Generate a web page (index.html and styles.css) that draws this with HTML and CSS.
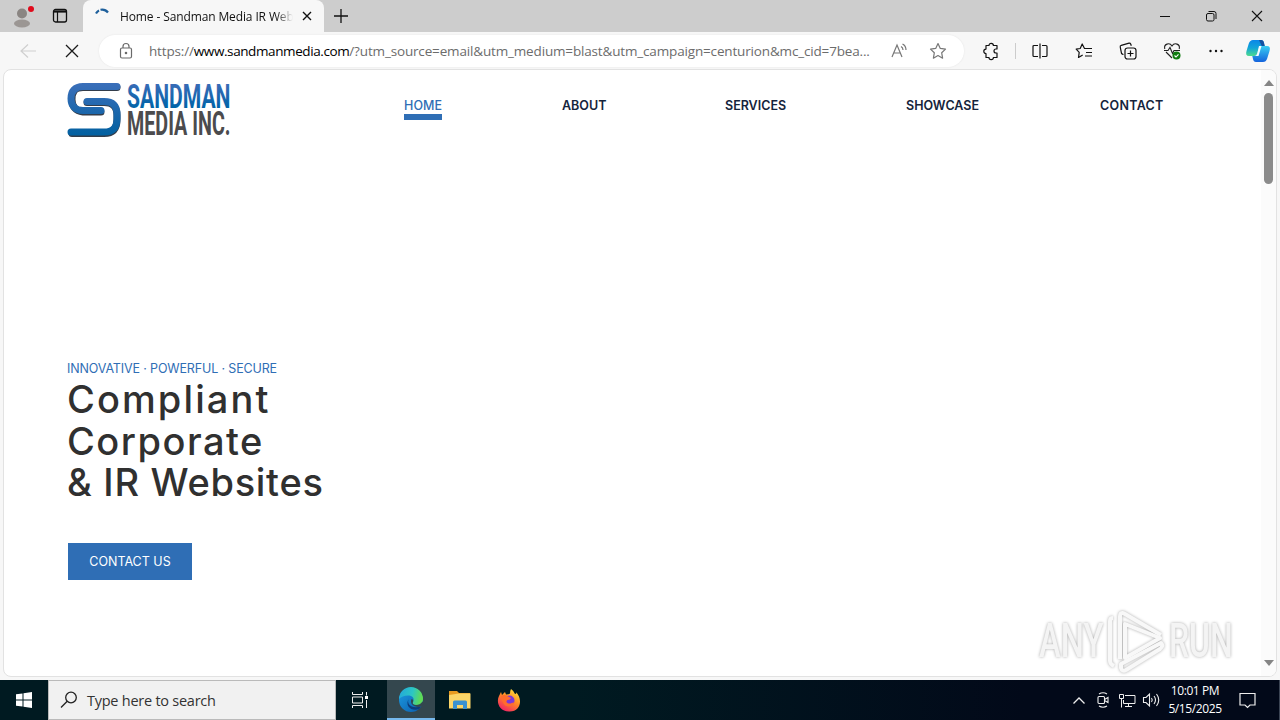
FILE: index.html
```
<!DOCTYPE html>
<html lang="en">
<head>
    <meta charset="UTF-8">
    <meta name="viewport" content="width=device-width, initial-scale=1.0">
    <title>Home - Sandman Media IR Websites</title>
    <link rel="stylesheet" href="styles.css">
</head>
<body>
    <div class="tabbar">
        <div class="profile">
            <svg width="28" height="28" viewBox="0 0 28 28"><circle cx="14" cy="10.500" r="5" fill="#8a8582"/><ellipse cx="14" cy="20.500" rx="8" ry="4" fill="#9b9693"/><circle cx="23" cy="6" r="3" fill="#e00b1c"/></svg>
        </div>
        <div class="workspaces">
            <svg width="16" height="16" viewBox="0 0 16 16" fill="none" stroke="#111"><rect x="1.500" y="1.500" width="13" height="12.500" rx="2" stroke-width="1.300"/><path d="M2 3.500h12" stroke-width="2.200"/><path d="M5.500 4v10" stroke-width="1.200"/></svg>
        </div>
        <div class="tab">
            <svg class="spinner" width="16" height="16" viewBox="0 0 16 16" fill="none" stroke="#1d5f9b" stroke-width="2.200"><path d="M2 5.500Q3.200 3.200 5 2.400M6.500 1.800Q11 .8 14 4.500"/></svg>
            <span class="tab-title">Home - Sandman Media IR Webs</span>
            <svg width="10" height="10" viewBox="0 0 10 10" stroke="#111" stroke-width="1.400"><path d="M1 1l8 8M9 1l-8 8"/></svg>
        </div>
        <svg class="new-tab" width="14" height="14" viewBox="0 0 14 14" stroke="#111" stroke-width="1.300"><path d="M7 0v14M0 7h14"/></svg>
        <div class="window-buttons">
            <span><svg width="12" height="12" viewBox="0 0 12 12" stroke="#111"><path d="M1 6.500h10"/></svg></span>
            <span><svg width="12" height="12" viewBox="0 0 12 12" fill="none" stroke="#111"><rect x="1.500" y="3.500" width="7.500" height="7.500" rx="1.500"/><path d="M3.500 1.500h5.500a2 2 0 0 1 2 2v5.500"/></svg></span>
            <span><svg width="12" height="12" viewBox="0 0 12 12" stroke="#111" stroke-width="1.100"><path d="M1 1l10 10M11 1L1 11"/></svg></span>
        </div>
    </div>

    <div class="toolbar">
        <span class="tool"><svg width="16" height="16" viewBox="0 0 16 16" fill="none" stroke="#cfcfcf" stroke-width="1.200"><path d="M16 8H1M8 1.500L1 8l7 6.500"/></svg></span>
        <span class="tool"><svg width="14" height="14" viewBox="0 0 14 14" stroke="#1b1b1b" stroke-width="1.300"><path d="M1 1l12 12M13 1L1 13"/></svg></span>
        <div class="address">
            <svg class="lock" width="14" height="18" viewBox="0 0 14 18" fill="none" stroke="#6a6a6a" stroke-width="1.200"><rect x="1.500" y="6" width="11" height="10" rx="1.500"/><path d="M4 6V4.500a3 3 0 0 1 6 0V6"/><circle cx="7" cy="11" r=".7" fill="#6a6a6a"/></svg>
            <span class="url">https://<b>www.sandmanmedia.com</b>/?utm_source=email&amp;utm_medium=blast&amp;utm_campaign=centurion&amp;mc_cid=7bea...</span>
            <svg class="read" width="18" height="18" viewBox="0 0 18 18" fill="none" stroke="#777" stroke-width="1.200"><path d="M2 15L7 3l5 12M3.700 11h6.600M11 4.500q2 1 2 3.500M12.500 2q3.500 1.700 3.500 6"/></svg>
            <svg class="star" width="18" height="18" viewBox="0 0 18 18" fill="none" stroke="#777" stroke-width="1.200" stroke-linejoin="round"><path d="M9 1.500l2.300 4.900 5.200.7-3.800 3.700.9 5.400L9 13.600l-4.600 2.600.9-5.400-3.800-3.700 5.200-.7z"/></svg>
        </div>
        <span class="tool extensions"><svg width="16" height="18" viewBox="0 0 16 18" fill="none" stroke="#111" stroke-width="1.200" stroke-linejoin="round"><path d="M3 3.500h3a2.200 2.200 0 0 1 4.400 0H14V7h-1a2 2 0 0 0 0 4h1v4.500h-3.600a2.200 2.200 0 0 1-4.400 0H3V11.500a2.200 2.200 0 0 1 0-4.400z"/></svg></span>
        <span class="divider"></span>
        <span class="tool"><svg width="16" height="16" viewBox="0 0 16 16" fill="none" stroke="#111" stroke-width="1.200"><path d="M6 2.500H2q-1 0-1 1v9q0 1 1 1h4M10 2.500h4q1 0 1 1v9q0 1-1 1h-4M8 .5v15"/></svg></span>
        <span class="tool"><svg width="18" height="18" viewBox="0 0 18 18" fill="none" stroke="#111" stroke-width="1.200" stroke-linejoin="round"><path d="M9.500 6.500L7.200 2 5.200 6.500l-4 .6 3 3.300-.7 5.100 4.200-2.400M7.200 2l2.300 4.500H17M11 10.500h6M10 14h7"/></svg></span>
        <span class="tool"><svg width="18" height="18" viewBox="0 0 18 18" fill="none" stroke="#111" stroke-width="1.200"><path d="M4.500 12.500q-1.500 0-2-1.200L1.300 5.300q-.5-1.500 1-2L10 1.200q1.300-.2 1.800 1l.5 1.600"/><rect x="6" y="6" width="11" height="11" rx="2.500"/><path d="M11.500 8.500v6M8.500 11.500h6"/></svg></span>
        <span class="tool"><svg width="18" height="18" viewBox="0 0 18 18" fill="none" stroke="#222" stroke-width="1.100"><path d="M1.800 7C.5 2 6.500 0 9 4c2.500-4 8.500-2 7.200 3M3 10l6 6M1 8.500h4l2-3 2.500 6 1.500-3h6"/><circle cx="13.500" cy="13.500" r="4" fill="#107c10" stroke="none"/><path d="M11.500 13.500l1.500 1.500 2.500-2.700" stroke="#fff"/></svg></span>
        <span class="tool"><svg width="14" height="4" viewBox="0 0 14 4" fill="#111"><circle cx="1.500" cy="2" r="1.200"/><circle cx="7" cy="2" r="1.200"/><circle cx="12.500" cy="2" r="1.200"/></svg></span>
        <span class="tool copilot">
            <svg width="26" height="24" viewBox="0 0 26 24">
                <defs>
                    <linearGradient id="cpa" x1="0" y1="0" x2="0" y2="1"><stop offset="0" stop-color="#0a86e8"/><stop offset=".5" stop-color="#12a5d8"/><stop offset="1" stop-color="#4ddb8e"/></linearGradient>
                    <linearGradient id="cpb" x1="0" y1="0" x2="0" y2="1"><stop offset="0" stop-color="#38cdf2"/><stop offset="1" stop-color="#1463dc"/></linearGradient>
                </defs>
                <path d="M8 1h8q2.500 0 3 3l.7 3h-3q-2.200 0-3 3l-1.500 5q-.7 2-3 2H4Q0 17 1.500 12l2.300-7.500Q5 1 8 1z" fill="url(#cpa)"/>
                <path d="M18 23h-7q-2.500 0-3-3l-.7-3h2q2.200 0 3-3l1.500-5q.7-2 3-2H22q4 0 2.500 5l-2.300 7.500Q21 23 18 23z" fill="url(#cpb)"/>
                <path d="M14 7h2.500l-3 10H10q1.800-.5 2.300-3z" fill="#f5fbff"/>
                <path d="M14 1h2q2.500 0 3 3l.7 3h-3z" fill="#1450a0"/>
            </svg>
        </span>
    </div>

    <div class="page">
        <div class="site">
            <header class="site-header">
                <svg class="logo" width="166" height="56" viewBox="0 0 166 56">
                    <defs>
                        <linearGradient id="blue" gradientUnits="userSpaceOnUse" x1="0" y1="0" x2="0" y2="55"><stop offset="0" stop-color="#3c6fba"/><stop offset="1" stop-color="#0060a0"/></linearGradient>
                        <linearGradient id="word" gradientUnits="userSpaceOnUse" x1="0" y1="-24" x2="0" y2="0"><stop offset="0" stop-color="#3a6cb7"/><stop offset="1" stop-color="#0064a8"/></linearGradient>
                    </defs>
                    <g fill="none" stroke-width="7" stroke-linecap="round" stroke-linejoin="round">
                        <path d="M50 5.500H16C7.500 5.500 5 10 5 17.500S9 29 16 30h18M20 20.500h17c8.500 0 13 4 13 13v4c0 9-4 14-13 14H5" stroke="#333d4b"/>
                        <path d="M50 4.500H16C7.500 4.500 4 9.500 4 16.500s4 12 12 12h18M20 19.500h17c8.500 0 13 4 13 13v4c0 9-4 13.500-13 13.500H4" stroke="url(#blue)"/>
                    </g>
                    <g class="logo-text">
                        <text transform="translate(60 25.500) scale(.69 1)" textLength="150" lengthAdjust="spacingAndGlyphs" fill="url(#word)">SANDMAN</text>
                        <text transform="translate(60 53) scale(.69 1)" textLength="150" lengthAdjust="spacingAndGlyphs" fill="#4b4b4d">MEDIA INC.</text>
                    </g>
                </svg>
                <nav class="menu">
                    <a class="active">HOME</a>
                    <a>ABOUT</a>
                    <a>SERVICES</a>
                    <a>SHOWCASE</a>
                    <a class="contact">CONTACT</a>
                </nav>
            </header>
            <section class="hero">
                <p class="tagline">INNOVATIVE · POWERFUL · SECURE</p>
                <h1><span class="line-1">Compliant</span><br><span class="line-2">Corporate</span><br><span class="line-3">&amp; IR Websites</span></h1>
                <a class="button">CONTACT US</a>
            </section>
        </div>
        <div class="scrollbar">
            <svg width="10" height="6" viewBox="0 0 10 6"><path d="M0 6l5-6 5 6z" fill="#858585"/></svg>
            <div class="thumb"></div>
            <svg class="down" width="10" height="6" viewBox="0 0 10 6"><path d="M0 0l5 6 5-6z" fill="#858585"/></svg>
        </div>
        <svg class="watermark" width="204" height="68" viewBox="0 0 204 68">
            <g class="wm-text">
                <text transform="translate(4 50) scale(.7 1)" textLength="92" lengthAdjust="spacingAndGlyphs">ANY</text>
                <text transform="translate(134 50) scale(.7 1)" textLength="91" lengthAdjust="spacingAndGlyphs">RUN</text>
            </g>
            <g class="wm-mark">
                <path d="M78 11q-3 0-3 3v40q0 3 4 5"/>
                <path d="M85 52V10q0-6 5-3l36 21"/>
                <path d="M90 17v34l35-20z"/>
                <path d="M86 57v4q1 4 5 2l34-21q4-3 1-6z"/>
            </g>
        </svg>
    </div>

    <div class="taskbar">
        <div class="start"><svg width="16" height="16" viewBox="0 0 16 16" fill="#fff"><path d="M0 2.300L6.500 1.400V7.500H0zM7.500 1.200L16 0v7.500H7.500zM0 8.500h6.500v6.100L0 13.700zM7.500 8.500H16V16l-8.500-1.200z"/></svg></div>
        <div class="search">
            <svg width="18" height="18" viewBox="0 0 18 18" fill="none" stroke="#222" stroke-width="1.300"><circle cx="11" cy="6.500" r="5.300"/><path d="M7.200 10.300L1 16.500"/></svg>
            <span>Type here to search</span>
        </div>
        <div class="app"><svg width="18" height="16" viewBox="0 0 18 16" fill="none" stroke="#eee"><path d="M1.500 0v2.500h10V0M1.500 16v-2.500h10V16M1.500 5h10v6h-10zM15.500 0v3.500M15.500 8v8"/><path d="M14 4h3v3h-3z" fill="#fff" stroke="none"/></svg></div>
        <div class="app active-app">
            <svg width="26" height="26" viewBox="0 0 26 26">
                <defs>
                    <linearGradient id="ea" x1="0" y1="0" x2="1" y2=".2"><stop offset="0" stop-color="#22a6dc"/><stop offset=".6" stop-color="#2cc6c4"/><stop offset="1" stop-color="#5fdb55"/></linearGradient>
                    <linearGradient id="eb" x1="0" y1="0" x2="1" y2="1"><stop offset="0" stop-color="#1c9ce2"/><stop offset="1" stop-color="#0b5cad"/></linearGradient>
                </defs>
                <circle cx="13" cy="13" r="12" fill="url(#eb)"/>
                <path d="M1 12A12 12 0 0 1 25 12c0 4-3 6-7 6-3 0-4-1.500-3-3 2-4-.8-6.500-5-6.500-4 0-7 1.500-9 3.500z" fill="url(#ea)"/>
                <path d="M11 11.500c-3 5 2 11 12 8l-1.800 2.500C14 25 6 19 11 11.500z" fill="#0d3d7c"/>
                <path d="M13.500 12c2 .5 2 2 1.500 3-1 1.500 0 3 3 3 3 0 5-1 6.500-3.500L26 17l-3 2.500c-5 1.500-12-1.500-9.500-7.500z" fill="#34474e"/>
            </svg>
        </div>
        <div class="app"><svg width="22" height="20" viewBox="0 0 22 20"><path d="M0 1h8l2 2h11v4H0z" fill="#e89b20"/><path d="M0 5l10-1.500h11.500V18.500H0z" fill="#fbd568"/><path d="M4 19v-7q0-1.500 1.500-1.500h11q1.500 0 1.500 1.500v7h-4v-4H8v4z" fill="#3991d0"/></svg></div>
        <div class="app">
            <svg width="24" height="25" viewBox="0 0 24 25">
                <defs><linearGradient id="fx" x1=".8" y1="0" x2=".2" y2="1"><stop offset="0" stop-color="#ffe33d"/><stop offset=".45" stop-color="#ff8a25"/><stop offset="1" stop-color="#ef1a69"/></linearGradient></defs>
                <path d="M14 1q3 2 4 5 2-.5 1-2c7 7 5 20-7 19.500C2 23.500-1 14 2 8l2-4 1 3 3-3 1 2.500q3 0 4-1 0-3 1-4.500z" fill="url(#fx)"/>
                <circle cx="12.500" cy="12.500" r="5" fill="#7b38d8"/>
                <path d="M4 8q4-2 7 .5l3 1.500q-1 2-3.500 2c-2 1-1 4 2 3.500 2 0 3-1.500 5-1-2 5-9 5-11 1Q4 12 4 8z" fill="#ff6c2c"/>
            </svg>
        </div>
        <div class="tray">
            <svg width="12" height="7" viewBox="0 0 12 7" fill="none" stroke="#eee" stroke-width="1.300"><path d="M.5 6.500L6 1l5.500 5.500"/></svg>
            <svg class="meet" width="12" height="16" viewBox="0 0 12 16" fill="none" stroke="#eee" stroke-width="1.100"><rect x="1" y="4.500" width="6.500" height="7" rx="1"/><path d="M7.500 7.500L11 5.500v5l-3.500-2M2 2q4-2.500 8 0M2 14q4 2.500 8 0"/></svg>
            <svg class="net" width="17" height="15" viewBox="0 0 17 15" fill="none" stroke="#eee"><path d="M6 2.500h10v8H4.500V7M9.500 10.500v3M6 13.500h7M.5 1.500h4v4h-4zM2.500 5.500v9"/></svg>
            <svg class="sound" width="17" height="14" viewBox="0 0 17 14" fill="none" stroke="#eee" stroke-width="1.100"><path d="M.5 4.500h2.500L6.500 1v12L3 9.500H.5zM8.500 5q1.500 2 0 4M11 3q3 4 0 8M13.500 1q4.500 6 0 12"/></svg>
            <div class="clock"><span>10:01 PM</span><span>5/15/2025</span></div>
            <svg class="notes" width="17" height="17" viewBox="0 0 17 17" fill="none" stroke="#eee" stroke-width="1.200"><path d="M1 1.500h15v11.500h-5L8.500 15.500 6 13H1z"/></svg>
        </div>
    </div>
</body>
</html>
```

FILE: styles.css
```
* {
    box-sizing: border-box;
}
body {
    margin: 0;
    width: 1280px;
    height: 720px;
    overflow: hidden;
    display: flex;
    flex-direction: column;
    background: #f7f7f7;
    font-family: "Open Sans", "Noto Sans", sans-serif;
    color: #111;
}
svg {
    display: block;
    flex: none;
    overflow: visible;
}
.tabbar {
    height: 32px;
    display: flex;
    align-items: center;
    background: #cdcdcd;
    flex: none;
}
.profile {
    width: 44px;
    padding: 2px 0 0 8px;
}
.workspaces {
    width: 39px;
    padding-left: 8px;
}
.tab {
    width: 241px;
    height: 32px;
    display: flex;
    align-items: center;
    padding: 0 12px 0 11px;
    background: #f7f7f7;
    border-radius: 8px 8px 0 0;
}
.spinner {
    margin: 0 10px 0 0;
}
.tab-title {
    width: 174px;
    margin-right: 9px;
    white-space: nowrap;
    overflow: hidden;
    font-size: 12px;
    letter-spacing: -0.12px;
    -webkit-mask-image: linear-gradient(to right, #000 90%, transparent);
    mask-image: linear-gradient(to right, #000 90%, transparent);
}
.new-tab {
    margin-left: 10px;
}
.window-buttons {
    display: flex;
    margin-left: auto;
}
.window-buttons span {
    width: 46px;
    display: flex;
    justify-content: center;
}
.toolbar {
    height: 37px;
    display: flex;
    align-items: center;
    padding-left: 6px;
    flex: none;
}
.tool {
    width: 44px;
    display: flex;
    justify-content: center;
    flex: none;
}
.address {
    width: 865px;
    height: 32px;
    margin-left: 5px;
    display: flex;
    align-items: center;
    background: #fff;
    border-radius: 16px;
    padding-left: 20px;
    box-shadow: 0 0 2px #e4e4e4;
}
.url {
    width: 728px;
    margin-left: 16px;
    font-size: 13.5px;
    letter-spacing: -0.16px;
    white-space: nowrap;
    color: #6c6c6c;
}
.url b {
    font-weight: normal;
    letter-spacing: -0.4px;
    color: #000;
}
.read {
    margin-left: 13px;
}
.star {
    margin-left: 21px;
}
.extensions {
    margin-left: 5px;
}
.divider {
    width: 1px;
    height: 16px;
    margin: 0 2px;
    background: #ccc;
}
.copilot {
    width: 40px;
}
.page {
    position: relative;
    height: 608px;
    margin: 0 3px 3px;
    display: flex;
    flex: none;
    background: #fff;
    border: 1px solid #e2e2e2;
    border-radius: 8px;
    overflow: hidden;
}
.site {
    flex: 1;
    font-family: Inter, "Open Sans", sans-serif;
}
.site-header {
    display: flex;
    padding: 12px 0 0 63px;
}
.logo-text {
    font-family: Roboto, "Open Sans", sans-serif;
    font-weight: bold;
    font-size: 33px;
}
.menu {
    display: grid;
    grid-template-columns: 158px 163px 181px 194px auto;
    justify-items: start;
    margin: 15px 0 0 171px;
    font-size: 12.5px;
    font-weight: 600;
    line-height: 18px;
    color: #15243c;
}
.menu .active {
    color: #2f6eb5;
    height: 23px;
    font-weight: 500;
    letter-spacing: 0.1px;
    border-bottom: 6px solid #2f6eb5;
}
.menu .contact {
    letter-spacing: 0.3px;
}
.hero {
    padding: 222px 0 0 63px;
}
.tagline {
    margin: 0;
    font-size: 12.5px;
    line-height: 18px;
    letter-spacing: -0.14px;
    color: #2f6eb5;
}
h1 {
    margin: 1px 0 0;
    font-size: 38px;
    line-height: 41.5px;
    font-weight: 500;
    color: #303030;
}
.line-1 {
    letter-spacing: 2.1px;
}
.line-2 {
    letter-spacing: 1.5px;
}
.line-3 {
    letter-spacing: 0.7px;
}
.button {
    display: flex;
    align-items: center;
    justify-content: center;
    width: 124px;
    height: 37px;
    margin: 39px 0 0 1px;
    background: #2f6eb5;
    color: #fff;
    font-size: 12.5px;
}
.scrollbar {
    width: 15px;
    display: flex;
    flex-direction: column;
    align-items: center;
    padding: 10px 0;
    background: #fbfbfb;
}
.thumb {
    width: 9px;
    height: 91px;
    margin-top: 7px;
    border-radius: 5px;
    background: #8b8b8b;
}
.down {
    margin-top: auto;
}
.watermark {
    position: absolute;
    left: 1031px;
    top: 537px;
    filter: drop-shadow(0 0 1.5px #aaa);
}
.wm-text {
    font-family: Roboto, "Open Sans", sans-serif;
    font-weight: 500;
    font-size: 49px;
    fill: #f4f4f4;
}
.wm-mark {
    fill: none;
    stroke: #f8f8f8;
    stroke-width: 4px;
    stroke-linejoin: round;
}
.taskbar {
    height: 40px;
    display: flex;
    flex: none;
    background: linear-gradient(to right, #001a21, #001a21 45%, #020919 80%);
}
.start, .app {
    width: 48px;
    display: flex;
    align-items: center;
    justify-content: center;
}
.app {
    width: 49px;
}
.search {
    width: 288px;
    display: flex;
    align-items: center;
    padding-left: 11px;
    background: #f1f1f1;
    border: 1px solid #bababa;
    font-size: 14.5px;
    letter-spacing: -0.25px;
    color: #333;
}
.search span {
    margin-left: 9px;
}
.search + .app {
    width: 51px;
    padding-right: 3px;
}
.active-app {
    width: 48px;
    background: #34474e;
    box-shadow: inset 0 -2px #76b9ed;
}
.tray {
    display: flex;
    align-items: center;
    margin-left: auto;
    padding-right: 23px;
    border-right: 1px solid #3b4453;
}
.meet {
    margin-left: 12px;
}
.net {
    margin-left: 10px;
}
.sound {
    margin-left: 7px;
}
.clock {
    width: 70px;
    display: flex;
    flex-direction: column;
    text-align: center;
    color: #fff;
    font-size: 12px;
    line-height: 18px;
    letter-spacing: -0.4px;
}
.notes {
    margin-left: 9px;
}
```
